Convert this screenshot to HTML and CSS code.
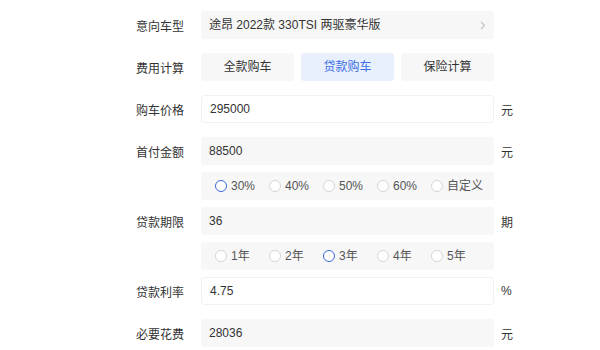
FILE: index.html
```html
<!DOCTYPE html>
<html lang="zh-CN">
<head>
    <meta charset="UTF-8">
    <meta name="viewport" content="width=device-width, initial-scale=1.0">
    <title>购车计算器</title>
    <link rel="stylesheet" href="styles.css">
</head>
<body>
    <div id="calc">
        <div class="row">
            <div class="label">意向车型</div>
            <div class="field select">
                <span>途昂 2022款 330TSI 两驱豪华版</span>
                <svg class="arrow" width="6" height="9" viewBox="0 0 6 9"><polyline points="1,1 4.5,4.5 1,8" fill="none" stroke="#c4c4c4" stroke-width="1.2"/></svg>
            </div>
        </div>

        <div class="row">
            <div class="label">费用计算</div>
            <div class="tabs">
                <div class="tab">全款购车</div>
                <div class="tab active">贷款购车</div>
                <div class="tab">保险计算</div>
            </div>
        </div>

        <div class="row">
            <div class="label">购车价格</div>
            <div class="field input">295000</div>
            <div class="unit">元</div>
        </div>

        <div class="row tight">
            <div class="label">首付金额</div>
            <div class="field">88500</div>
            <div class="unit">元</div>
        </div>

        <div class="row tight">
            <div class="label"></div>
            <div class="field radios">
                <div class="radio checked"><i></i>30%</div>
                <div class="radio"><i></i>40%</div>
                <div class="radio"><i></i>50%</div>
                <div class="radio"><i></i>60%</div>
                <div class="radio"><i></i>自定义</div>
            </div>
        </div>

        <div class="row tight">
            <div class="label">贷款期限</div>
            <div class="field">36</div>
            <div class="unit">期</div>
        </div>

        <div class="row tight">
            <div class="label"></div>
            <div class="field radios">
                <div class="radio"><i></i>1年</div>
                <div class="radio"><i></i>2年</div>
                <div class="radio checked"><i></i>3年</div>
                <div class="radio"><i></i>4年</div>
                <div class="radio"><i></i>5年</div>
            </div>
        </div>

        <div class="row">
            <div class="label">贷款利率</div>
            <div class="field input">4.75</div>
            <div class="unit">%</div>
        </div>

        <div class="row">
            <div class="label">必要花费</div>
            <div class="field">28036</div>
            <div class="unit">元</div>
        </div>
    </div>
</body>
</html>
```

FILE: styles.css
```css
*{
    margin: 0;
    padding: 0;
    box-sizing: border-box;
}
body{
    background: #fff;
    font: 12px "Liberation Sans", "Noto Sans CJK SC", sans-serif;
    color: #333;
}
#calc{
    padding: 11px 0 0 136px;
}
.row{
    display: flex;
    align-items: center;
    height: 28px;
    margin-bottom: 14px;
}
.row.tight{
    margin-bottom: 7px;
}
.label{
    width: 65px;
    flex: none;
    color: #333;
}
.field{
    width: 293px;
    height: 28px;
    line-height: 28px;
    padding: 0 8px;
    background: #f7f7f8;
    border-radius: 3px;
    color: #333;
}
.field.input{
    background: #fff;
    border: 1px solid #f2f2f3;
    line-height: 26px;
}
.select{
    display: flex;
    justify-content: space-between;
    align-items: center;
    padding-right: 8px;
}
.unit{
    margin-left: 7px;
    color: #333;
}
.tabs{
    width: 293px;
    display: flex;
    gap: 7px;
}
.tab{
    flex: 1;
    height: 28px;
    line-height: 28px;
    text-align: center;
    background: #f7f7f8;
    border-radius: 3px;
    color: #333;
}
.tab.active{
    background: #e9f0fd;
    color: #3d6fe6;
}
.radios{
    display: flex;
    align-items: center;
    padding-left: 14px;
}
.radio{
    width: 54px;
    display: flex;
    align-items: center;
    gap: 4px;
    color: #555;
}
.radio i{
    width: 12px;
    height: 12px;
    border-radius: 50%;
    border: 1px solid #d6d6d6;
    background: #fff;
}
.radio.checked i{
    border: 1.5px solid #3868de;
}
```
